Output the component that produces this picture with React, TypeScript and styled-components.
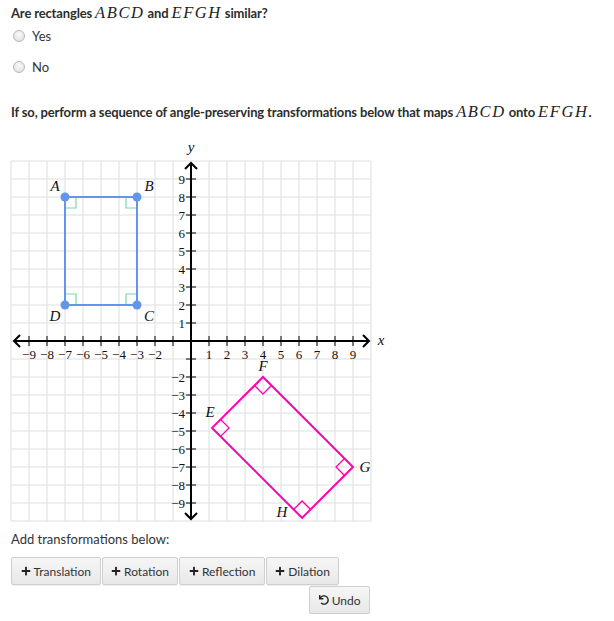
import React from 'react';
import styled, { createGlobalStyle } from 'styled-components';
import { FaPlus, FaUndo } from 'react-icons/fa';

const GlobalStyle = createGlobalStyle`
  html, body {
    margin: 0;
    padding: 0;
    background: #fff;
  }
  body {
    font-family: Lato, "Open Sans", sans-serif;
    color: #333;
  }
`;

const Page = styled.div`
  padding: 5px 0 0 11px;
  width: 603px;
`;

const Question = styled.p`
  margin: 0;
  font-size: 13px;
  line-height: 16px;
  font-weight: 700;
  letter-spacing: -0.15px;
  color: #2d2d2d;
`;

const MathVar = styled.span`
  font-family: "Liberation Serif", serif;
  font-style: italic;
  font-weight: 400;
  font-size: 16.5px;
  letter-spacing: 1.6px;
  color: #222;
`;

const Options = styled.div`
  display: flex;
  flex-direction: column;
  gap: 11px;
  margin-top: 5px;
`;

const Option = styled.label`
  display: flex;
  align-items: center;
  gap: 7px;
  height: 20px;
  font-size: 13px;
  padding-left: 2px;
`;

const Radio = styled.span`
  width: 10px;
  height: 10px;
  border-radius: 50%;
  border: 1px solid #b8b8b8;
  background: radial-gradient(circle at 50% 35%, #fafafa, #dcdcdc);
`;

const Instruction = styled(Question)`
  margin-top: 27px;
`;

const Graph = styled.svg`
  display: block;
  margin-top: 15px;
  margin-left: -11px;
`;

const TickLabel = styled.text`
  font-family: "Liberation Serif", serif;
  font-size: 13px;
  fill: #111;
`;

const PointLabel = styled.text`
  font-family: "Liberation Serif", serif;
  font-style: italic;
  font-size: 15px;
  fill: #111;
`;

const AddLabel = styled.p`
  margin: 6px 0 0;
  font-size: 13px;
  line-height: 16px;
`;

const Toolbar = styled.div`
  width: 360px;
  margin-top: 10px;
`;

const ButtonRow = styled.div`
  display: flex;
  gap: 1px;
`;

const UndoRow = styled.div`
  display: flex;
  justify-content: flex-end;
  margin-top: 1px;
  padding-right: 1px;
`;

const Button = styled.button`
  display: flex;
  align-items: center;
  gap: 3px;
  height: 28px;
  padding: 0 8.5px;
  border: 1px solid #cfcfcf;
  border-radius: 2px;
  background: linear-gradient(#f6f6f6, #e8e8e8);
  box-shadow: 0 1px 0 rgba(0, 0, 0, 0.06);
  font-family: Lato, "Open Sans", sans-serif;
  font-size: 12px;
  color: #333;
  cursor: pointer;

  svg {
    width: 10px;
    height: 10px;
    color: #222;
  }
`;

const UNIT = 18;
const OX = 191;
const OY = 341;
const px = (x: number) => OX + x * UNIT;
const py = (y: number) => OY - y * UNIT;

const BLUE = '#6495ed';
const PINK = '#ff00af';
const GREEN = '#7fd6a2';

type Pt = [number, number];

const range = (a: number, b: number) => {
  const out: number[] = [];
  for (let i = a; i <= b; i++) out.push(i);
  return out;
};

const minus = (n: number) => (n < 0 ? `\u2212${-n}` : `${n}`);

// right angle marker at corner p, along unit directions u and v, side s
const corner = (p: Pt, u: Pt, v: Pt, s: number) => {
  const a = [p[0] + u[0] * s, p[1] + u[1] * s];
  const b = [p[0] + (u[0] + v[0]) * s, p[1] + (u[1] + v[1]) * s];
  const c = [p[0] + v[0] * s, p[1] + v[1] * s];
  return `M${a[0]},${a[1]} L${b[0]},${b[1]} L${c[0]},${c[1]}`;
};

const CoordinatePlane: React.FC = () => {
  const r2 = Math.SQRT2;
  const A: Pt = [px(-7), py(8)];
  const B: Pt = [px(-3), py(8)];
  const C: Pt = [px(-3), py(2)];
  const D: Pt = [px(-7), py(2)];

  const E: Pt = [px(4 - 2 * r2), py(-2 - 2 * r2)];
  const F: Pt = [px(4), py(-2)];
  const G: Pt = [px(9), py(-7)];
  const H: Pt = [px(9 - 2 * r2), py(-7 - 2 * r2)];

  const d = 1 / r2;
  const ticks = range(-9, 9).filter((n) => n !== 0);

  return (
    <Graph width={395} height={390} viewBox="0 135 395 390">
      {range(-10, 10).map((n) => (
        <g key={n} stroke="#dedede" strokeWidth={1}>
          <line x1={px(n)} y1={py(10)} x2={px(n)} y2={py(-10)} />
          <line x1={px(-10)} y1={py(n)} x2={px(10)} y2={py(n)} />
        </g>
      ))}

      <g stroke="#000" strokeWidth={2} fill="none">
        <line x1={14} y1={OY} x2={369} y2={OY} />
        <line x1={OX} y1={163} x2={OX} y2={519} />
        <path d="M20,335 L14,341 L20,347" />
        <path d="M363,335 L369,341 L363,347" />
        <path d="M185,169 L191,163 L197,169" />
        <path d="M185,513 L191,519 L197,513" />
      </g>
      <g stroke="#000" strokeWidth={1}>
        {ticks.map((n) => (
          <g key={n}>
            <line x1={px(n)} y1={OY - 5} x2={px(n)} y2={OY + 5} />
            <line x1={OX - 5} y1={py(n)} x2={OX + 5} y2={py(n)} />
          </g>
        ))}
      </g>
      {ticks
        .filter((n) => n !== -1)
        .map((n) => (
          <g key={n}>
            <TickLabel x={px(n)} y={OY + 18} textAnchor="middle">
              {minus(n)}
            </TickLabel>
            <TickLabel x={OX - 6} y={py(n) + 4.5} textAnchor="end">
              {minus(n)}
            </TickLabel>
          </g>
        ))}
      <PointLabel x={OX} y={152} textAnchor="middle">y</PointLabel>
      <PointLabel x={381} y={345} textAnchor="middle">x</PointLabel>

      <g stroke={GREEN} strokeWidth={1.2} fill="none">
        <path d={corner(A, [1, 0], [0, 1], 11)} />
        <path d={corner(B, [-1, 0], [0, 1], 11)} />
        <path d={corner(C, [-1, 0], [0, -1], 11)} />
        <path d={corner(D, [1, 0], [0, -1], 11)} />
      </g>
      <polygon
        points={[A, B, C, D].map((p) => p.join(',')).join(' ')}
        fill="none"
        stroke={BLUE}
        strokeWidth={2}
      />
      {[A, B, C, D].map((p, i) => (
        <circle key={i} cx={p[0]} cy={p[1]} r={4.5} fill={BLUE} />
      ))}
      <PointLabel x={55} y={191} textAnchor="middle">A</PointLabel>
      <PointLabel x={149} y={191} textAnchor="middle">B</PointLabel>
      <PointLabel x={149} y={321} textAnchor="middle">C</PointLabel>
      <PointLabel x={55} y={321} textAnchor="middle">D</PointLabel>

      <g stroke={PINK} strokeWidth={1.3} fill="none">
        <path d={corner(E, [d, -d], [d, d], 12)} />
        <path d={corner(F, [-d, d], [d, d], 12)} />
        <path d={corner(G, [-d, -d], [-d, d], 12)} />
        <path d={corner(H, [d, -d], [-d, -d], 12)} />
      </g>
      <polygon
        points={[E, F, G, H].map((p) => p.join(',')).join(' ')}
        fill="none"
        stroke={PINK}
        strokeWidth={2}
      />
      <PointLabel x={210} y={417} textAnchor="middle">E</PointLabel>
      <PointLabel x={263} y={371} textAnchor="middle">F</PointLabel>
      <PointLabel x={365} y={472} textAnchor="middle">G</PointLabel>
      <PointLabel x={282} y={517} textAnchor="middle">H</PointLabel>
    </Graph>
  );
};

const transformations = ['Translation', 'Rotation', 'Reflection', 'Dilation'];

const App: React.FC = () => (
  <>
    <GlobalStyle />
    <Page>
      <Question>
        Are rectangles <MathVar>ABCD</MathVar> and <MathVar>EFGH</MathVar> similar?
      </Question>
      <Options>
        <Option>
          <Radio />
          Yes
        </Option>
        <Option>
          <Radio />
          No
        </Option>
      </Options>
      <Instruction>
        If so, perform a sequence of angle-preserving transformations below that maps{' '}
        <MathVar>ABCD</MathVar> onto <MathVar>EFGH</MathVar>.
      </Instruction>
      <CoordinatePlane />
      <AddLabel>Add transformations below:</AddLabel>
      <Toolbar>
        <ButtonRow>
          {transformations.map((t) => (
            <Button key={t}>
              <FaPlus />
              {t}
            </Button>
          ))}
        </ButtonRow>
        <UndoRow>
          <Button>
            <FaUndo />
            Undo
          </Button>
        </UndoRow>
      </Toolbar>
    </Page>
  </>
);

export default App;
